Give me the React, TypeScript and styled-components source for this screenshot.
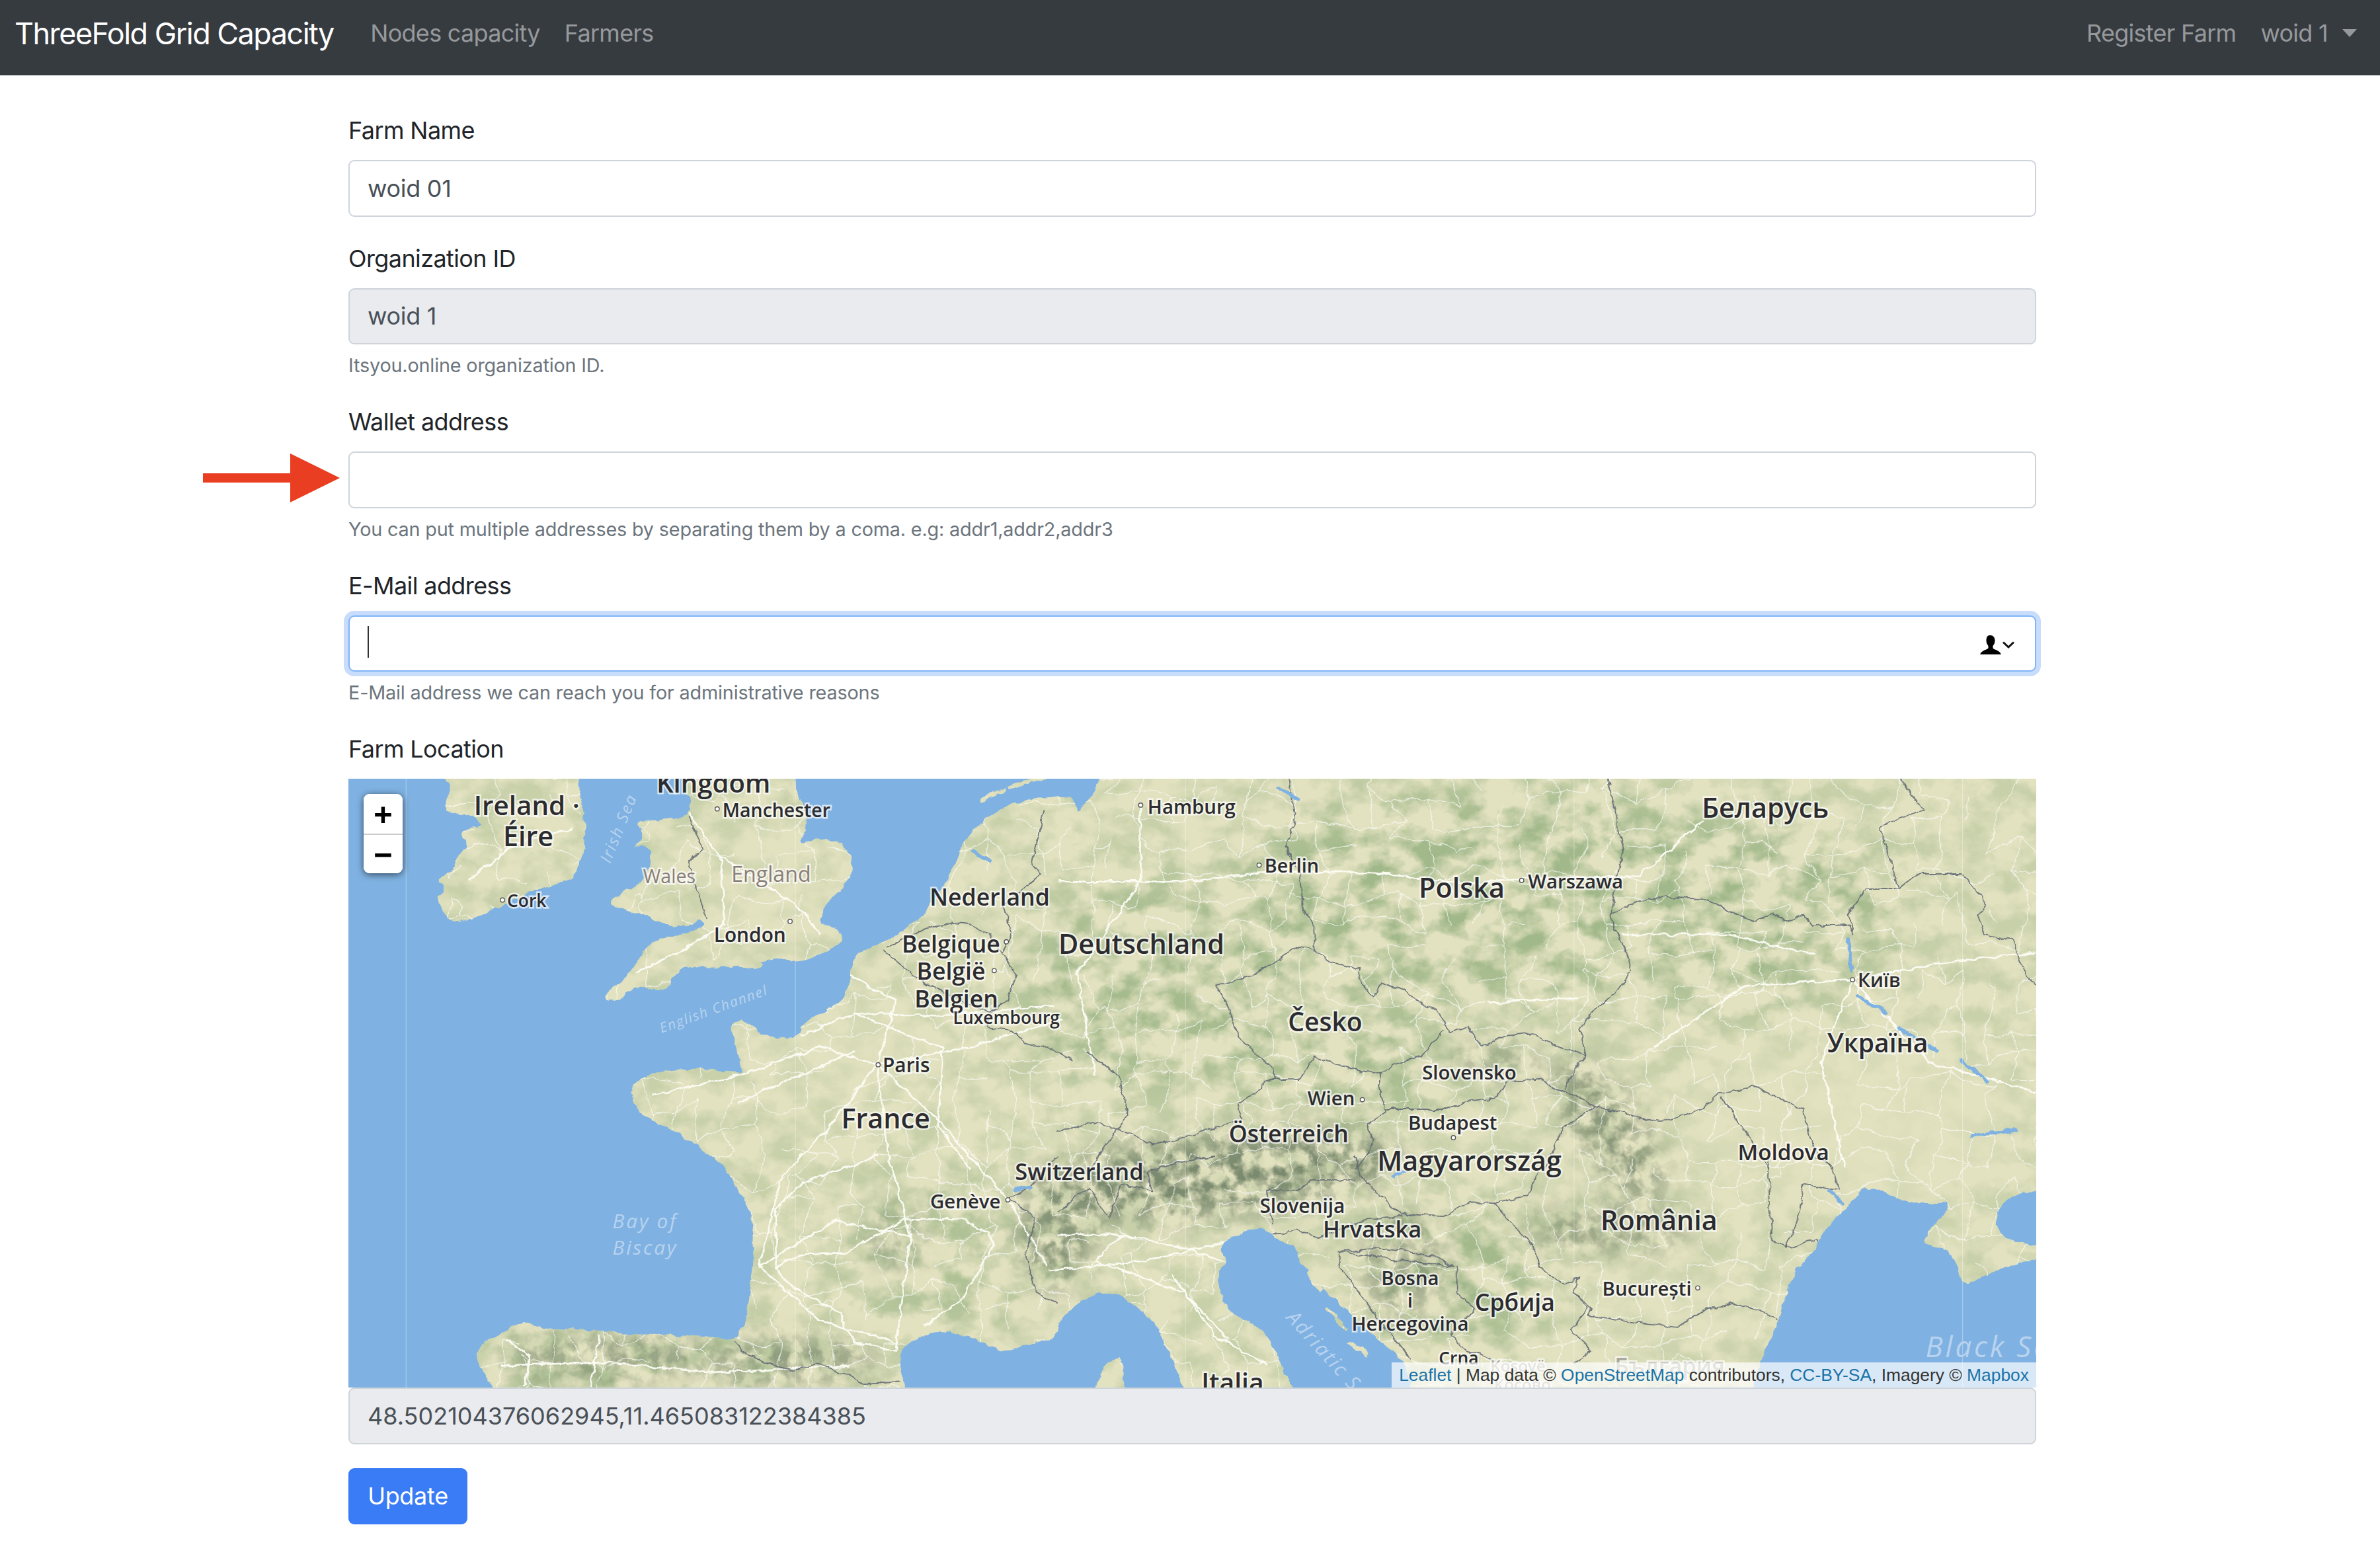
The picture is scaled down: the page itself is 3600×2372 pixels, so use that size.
import React from "react";
import styled, { createGlobalStyle } from "styled-components";

const SANS = `Inter, "Liberation Sans", Arial, sans-serif`;

const Global = createGlobalStyle`
  html, body { margin: 0; padding: 0; background: #fff; }
  body { font-family: ${SANS}; color: #212529; }
  * { box-sizing: border-box; }
`;

const Page = styled.div`
  width: 3600px;
  min-height: 2372px;
  background: #fff;
`;

const NavBar = styled.nav`
  height: 114px;
  background: #363b40;
  display: flex;
  align-items: center;
  padding: 0 35px 14px 22px;
`;

const Brand = styled.a`
  font-size: 45px;
  letter-spacing: -1.55px;
  color: #fff;
  text-decoration: none;
  margin-right: 37px;
  white-space: nowrap;
`;

const NavLink = styled.a`
  font-size: 36px;
  letter-spacing: -0.72px;
  color: #96999c;
  text-decoration: none;
  padding: 0 18.500px;
  white-space: nowrap;
  display: inline-flex;
  align-items: center;
`;

const NavSpacer = styled.div`
  flex: 1;
`;

const Caret = styled.span`
  width: 0;
  height: 0;
  margin-left: 22px;
  margin-right: -18.500px;
  border-top: 12px solid #96999c;
  border-left: 11px solid transparent;
  border-right: 11px solid transparent;
`;

const Main = styled.main`
  width: 2553px;
  margin-left: 527px;
  padding-top: 56px;
`;

const Group = styled.div`
  position: relative;
  margin-bottom: 36px;
`;

const Label = styled.label`
  display: block;
  font-size: 36px;
  line-height: 54px;
  margin-bottom: 18px;
  letter-spacing: -0.6px;
  color: #212529;
`;

const TextInput = styled.input`
  display: block;
  width: 100%;
  height: 85.5px;
  padding: 0 27px;
  font-family: ${SANS};
  font-size: 36px;
  letter-spacing: -0.3px;
  color: #495057;
  background: #fff;
  border: 2.25px solid #ced4da;
  border-radius: 9px;
  outline: none;
  &.muted { background: #e9ebef; }
  &.focus { border-color: #80b4f8; box-shadow: 0 0 0 7px #c8dcfb; }
`;

const Help = styled.small`
  display: block;
  margin-top: 9px;
  font-size: 28.8px;
  line-height: 45px;
  letter-spacing: -0.18px;
  color: #6c757d;
`;

const ArrowMark = styled.svg`
  position: absolute;
  left: -220px;
  top: 75px;
  width: 207px;
  height: 74px;
`;

const TextCaret = styled.span`
  position: absolute;
  left: 29px;
  top: 88px;
  width: 2px;
  height: 48px;
  background: #333;
`;

const FillIcon = styled.svg`
  position: absolute;
  right: 33px;
  top: 101px;
  width: 52px;
  height: 30px;
`;

const MapBox = styled.div`
  position: relative;
  height: 921px;
  overflow: hidden;
  background: #7fb2e2;
`;

const MapArt = styled.svg`
  display: block;
  width: 100%;
  height: 100%;
`;

const ZoomBar = styled.div`
  position: absolute;
  left: 23px;
  top: 23px;
  width: 59px;
  border-radius: 9px;
  overflow: hidden;
  box-shadow: 0 2px 11px rgba(0, 0, 0, 0.6);
  background: #fff;
`;

const ZoomButton = styled.a`
  display: flex;
  align-items: center;
  justify-content: center;
  height: 60px;
  padding-top: 9px;
  font-family: "Liberation Mono", "Courier New", monospace;
  font-weight: 700;
  font-size: 49px;
  color: #000;
  background: #fff;
  text-decoration: none;
  & + & { border-top: 2px solid #ccc; }
`;

const Attribution = styled.div`
  position: absolute;
  right: 0;
  bottom: 0;
  height: 38px;
  padding: 0 11px;
  display: flex;
  align-items: center;
  white-space: pre;
  font-family: "Liberation Sans", Arial, sans-serif;
  font-size: 26.4px;
  color: #333;
  background: rgba(255, 255, 255, 0.7);
`;

const AttrLink = styled.a`
  color: #1a73a8;
  text-decoration: none;
`;

const CoordInput = styled(TextInput)`
  background: #e9ebef;
  margin-bottom: 36px;
  letter-spacing: 0;
`;

const SubmitButton = styled.button`
  display: block;
  width: 180px;
  height: 85.5px;
  padding: 0;
  font-family: ${SANS};
  font-size: 36px;
  letter-spacing: -0.3px;
  color: #fff;
  background: #3a7bf6;
  border: none;
  border-radius: 9px;
`;

const MapLabel = styled.text<{ $size: number; $tone?: string }>`
  font-family: "Open Sans", sans-serif;
  font-weight: ${(p) => (p.$tone === "soft" || p.$tone === "water" ? 400 : 600)};
  font-style: ${(p) => (p.$tone === "water" ? "italic" : "normal")};
  font-size: ${(p) => p.$size}px;
  letter-spacing: ${(p) => (p.$tone === "water" ? "0.09em" : "0")};
  fill: ${(p) => (p.$tone === "soft" ? "#8a7f78" : p.$tone === "water" ? "#b9d2ee" : p.$tone === "ghost" ? "#a8a89c" : "#2c2c2f")};
  stroke: ${(p) => (p.$tone === "water" ? "none" : "rgba(255,255,255,0.7)")};
  stroke-width: 2.2px;
  paint-order: stroke;
  text-anchor: middle;
  dominant-baseline: central;
`;

type P = [number, number];
const A = (x: number, y: number): P => [217.8 + 0.3055 * x, 509.6 + 0.1667 * y];
const B = (x: number, y: number): P => [696.9 + 0.4166 * x, 509.6 + 0.1667 * y];
const C = (x: number, y: number): P => [217.8 + 0.3055 * x, 762.2 + 0.1728 * y];
const D = (x: number, y: number): P => [696.9 + 0.4166 * x, 762.2 + 0.1728 * y];

const mapAll = (f: (x: number, y: number) => P, raw: number[]): P[] => {
  const out: P[] = [];
  for (let i = 0; i < raw.length; i += 2) out.push(f(raw[i], raw[i + 1]));
  return out;
};

const line = (pts: P[]) => "M" + pts.map((p) => `${p[0].toFixed(1)} ${p[1].toFixed(1)}`).join("L");

const smooth = (pts: P[]) => {
  const n = pts.length;
  const mid = (a: P, b: P): P => [(a[0] + b[0]) / 2, (a[1] + b[1]) / 2];
  const s = mid(pts[n - 1], pts[0]);
  let d = `M${s[0].toFixed(1)} ${s[1].toFixed(1)}`;
  for (let i = 0; i < n; i++) {
    const m = mid(pts[i], pts[(i + 1) % n]);
    d += `Q${pts[i][0].toFixed(1)} ${pts[i][1].toFixed(1)} ${m[0].toFixed(1)} ${m[1].toFixed(1)}`;
  }
  return d + "Z";
};

const IRELAND: P[] = [
  [292, 495], [292, 504], [292.6, 514], [298.8, 519.6], [292.6, 527.9], [294.2, 536.3], [312.5, 538], [320.1, 545.4], [301.8, 547],
  [309.5, 557.9], [298.8, 567.9], [300.3, 573.8], [286.5, 580.4], [294.2, 583.8], [287.5, 593], [294.2, 604.6], [300.9, 609.6],
  [333.9, 596.3], [352.2, 586.3], [378.2, 581.3], [384.3, 562.9], [385.8, 549.6], [384.3, 529.6], [379.7, 521.3], [384.3, 504], [384.3, 495],
];

const BRITAIN: P[] = [
  [454, 495], [490, 495], [523, 495], [523, 504], [523.3, 513.6], [532.5, 542.9], [524.8, 557.9], [538.6, 552.9], [553.9, 554.6], [563, 566.3], [560, 581.3],
  [543.1, 596.3], [538.6, 609.6], [555.4, 613], [553.9, 623], [529.4, 634.6], [511.1, 632.1], [492.8, 635.5], [471.4, 638],
  [453, 636.3], [442.3, 644.6], [440.8, 653.8], [416.4, 649.6], [407.2, 661.3], [395, 658], [413.3, 644.6], [425.5, 623],
  [437.8, 618], [462.2, 613], [463.7, 605.5], [450, 611.3], [437.8, 609.6], [428.6, 604.6], [404.2, 598], [402.6, 593],
  [416.4, 584.6], [428.6, 576.3], [428.6, 557.9], [416.4, 558.8], [425.5, 549.6], [417.9, 541.3], [431.7, 541.3], [453, 537.9],
  [456.1, 527.9], [448.4, 519.6], [454, 505],
];

const MAINLAND: P[] = [
  [726, 495], [726, 504], [726, 514], [716, 530], [710, 536], [707, 526], [697, 524], [676, 527], [655, 536], [645.5, 543], [636, 553],
  [630, 565], [627, 576], [615, 594.6], [603, 608], [584, 621], [563, 628], [560, 643], [558.4, 656], [547.7, 664.6], [529.4, 673],
  [525, 686], [502, 683], [494, 674], [480.5, 673], [484, 686], [488, 704.6], [490, 708], [453, 703], [416, 711], [416, 729.6],
  [428.6, 738], [453, 751], [471, 763], [477.5, 771], [480.5, 772.6], [486.6, 786.4], [494.3, 798.5], [497.3, 814], [495.8, 840],
  [491.2, 872.8], [483.6, 884], [462.2, 881.4], [440.8, 879.7], [413.3, 879.7], [388.9, 876], [361.4, 876], [346.1, 871],
  [335.4, 876], [315.6, 886.6], [312.5, 897], [324.7, 914], [328, 925], [330, 935], [590, 935], [594, 925], [596.6, 914], [592, 891.8], [596.6, 886.6],
  [611.9, 878], [624, 878], [645.5, 883], [660.8, 891.8], [676, 886.6], [696.9, 881.4], [697, 869.3], [722, 850.3], [738.6, 853.8],
  [759.4, 869.3], [770, 890], [780, 914], [783, 925], [785, 935], [860, 935], [855, 925], [851, 914], [834.4, 876.2], [807.3, 864.2], [801, 840], [809.4, 831.3],
  [801, 821], [830.2, 807.1], [836.5, 812.3], [840.6, 817.5], [853.1, 821], [857.3, 834.8], [880.2, 857.2], [905.2, 881.4], [926, 897],
  [930, 920], [935, 935], [1150, 935], [1155, 915], [1159.3, 897.9], [1174, 866], [1180, 840], [1196.8, 822.7], [1201, 812], [1219.7, 793.3], [1230, 779.5],
  [1259.3, 795], [1288.5, 791.6], [1271.8, 810.6], [1265.6, 819.2], [1288.5, 826], [1292.6, 850.3], [1313.5, 836.5], [1352, 827.9],
  [1352, 821], [1321.8, 819.2], [1313.5, 805.4], [1321.8, 788], [1352, 783], [1356, 775], [1362, 650], [1362, 495], [1340, 495],
];

const LAND = [
  smooth(IRELAND),
  smooth(BRITAIN),
  smooth(MAINLAND),
  "M486 636a8 3.5 0 1 0 16 0a8 3.5 0 1 0 -16 0Z",
  "M722 914q4 -18 16 -20q4 8 2 24l-3 10h-14Z",
  "M645 528q10 -7 18 -9l-1 2q-8 4 -16 9Z",
  "M664 519q10 -5 24 -7l1 2q-12 2 -24 7Z",
  "M862 838l10 12l-2 2l-10 -12Z",
  "M875 862l14 14l-2 1l-14 -14Z",
  "M890 884l12 8l-2 2l-12 -8Z",
  "M780 905a5 3 0 1 0 8 0Z",
];

const BORDERS: P[][] = [
  mapAll(B, [365, 20, 375, 200, 360, 290, 385, 420, 385, 530, 405, 600, 405, 700]),
  mapAll(B, [405, 700, 370, 690, 355, 735, 310, 800, 250, 840, 270, 930, 285, 1040, 340, 1170, 345, 1210, 385, 1210, 405, 1125, 460, 1170, 510, 1190, 530, 1155, 575, 1120, 610, 1020]),
  mapAll(B, [405, 700, 430, 745, 480, 780, 475, 820, 500, 885, 510, 830, 550, 860, 570, 910, 600, 935, 620, 1030, 650, 1005, 670, 1085, 700, 1045, 750, 1030, 790, 1080, 835, 1115]),
  mapAll(B, [835, 1115, 825, 1010, 850, 940, 900, 825, 905, 740, 880, 620, 875, 560, 885, 400, 895, 310, 870, 20]),
  mapAll(B, [875, 560, 915, 510, 960, 490, 1020, 500, 1075, 560, 1100, 590, 1130, 560, 1160, 590, 1180, 560, 1195, 610, 1250, 600, 1258, 640, 1250, 560, 1280, 460, 1330, 460, 1360, 400, 1430, 400, 1470, 520, 1455, 570, 1465, 640, 1510, 660, 1530, 800, 1547, 840]),
  mapAll(B, [1330, 20, 1370, 150, 1300, 210, 1330, 460]),
  mapAll(B, [345, 1210, 325, 1220, 320, 1250, 285, 1310, 290, 1370, 250, 1400, 190, 1450, 150, 1470, 110, 1420, 55, 1380, 0, 1420]),
  mapAll(B, [510, 1190, 510, 1270, 520, 1340, 490, 1390, 500, 1450, 490, 1500, 470, 1568]),
  mapAll(B, [520, 1330, 610, 1330, 650, 1300, 690, 1290, 710, 1220, 760, 1215, 790, 1250, 835, 1300, 850, 1320, 950, 1380, 1020, 1330, 1045, 1270, 1100, 1240, 1180, 1330, 1190, 1450, 1225, 1568]),
  mapAll(B, [835, 1115, 800, 1250]),
  mapAll(B, [1050, 1280, 1095, 1450, 1125, 1568]),
  mapAll(B, [850, 1320, 800, 1400, 770, 1568]),
  mapAll(D, [760, 60, 745, 150, 690, 180, 655, 175, 610, 230, 545, 220, 490, 110, 475, 50, 470, 0]),
  mapAll(D, [330, 130, 380, 130, 400, 90, 470, 90]),
  mapAll(D, [330, 130, 340, 260]),
  mapAll(D, [340, 300, 380, 280, 410, 310, 490, 240, 545, 225]),
  mapAll(D, [445, 365, 510, 350, 600, 385, 625, 420, 445, 365, 445, 420, 470, 500, 500, 600, 540, 720, 560, 780]),
  mapAll(D, [630, 420, 630, 520, 660, 580, 620, 680, 640, 730, 690, 780]),
  mapAll(D, [690, 180, 720, 260, 755, 350, 760, 420, 800, 490, 825, 460, 815, 520, 845, 580, 840, 610, 900, 630, 980, 650, 1020, 590, 1070, 560, 1110, 590, 1145, 630]),
  mapAll(D, [815, 520, 840, 580, 810, 660, 845, 740, 815, 790]),
  mapAll(D, [1125, 0, 1125, 150, 1130, 320, 1160, 350, 1200, 315, 1210, 360]),
  mapAll(D, [1200, 0, 1225, 40, 1235, 130, 1180, 110, 1170, 250, 1150, 350]),
  mapAll(C, [870, 705, 900, 760, 960, 800, 1000, 820, 1050, 790, 1110, 830, 1150, 870, 1230, 860]),
  mapAll(C, [1568, 0, 1500, 130, 1460, 160, 1520, 230, 1500, 370, 1520, 520, 1568, 560]),
  mapAll(D, [0, 210, 50, 120, 80, 240, 100, 110, 150, 130, 140, 60, 200, 20, 250, 0]),
  mapAll(A, [1190, 700, 1230, 760, 1280, 830, 1340, 880, 1420, 950, 1420, 1010, 1470, 1020, 1500, 1070, 1568, 1100, 1600, 1140]),
  mapAll(A, [1200, 690, 1280, 620, 1340, 590, 1380, 600, 1420, 640, 1450, 720, 1480, 800, 1460, 900, 1420, 950]),
  mapAll(A, [1450, 720, 1470, 630, 1450, 530, 1530, 400, 1510, 350, 1540, 150]),
  mapAll(A, [1630, 1100, 1700, 1200, 1720, 1350, 1660, 1500, 1640, 1568]),
  mapAll(A, [770, 170, 800, 300, 770, 350, 800, 520, 810, 575]),
];

const LAKES: P[][] = [
  mapAll(B, [1250, 660, 1255, 780]),
  mapAll(B, [1265, 880, 1310, 950]),
  mapAll(B, [1330, 1010, 1390, 1100]),
  mapAll(B, [1430, 1140, 1470, 1220]),
  mapAll(B, [1445, 1435, 1515, 1410]),
  mapAll(B, [350, 60, 380, 105]),
  mapAll(D, [530, 75, 555, 55]),
  mapAll(C, [1475, 130, 1510, 118]),
  mapAll(A, [1385, 310, 1420, 350]),
  mapAll(D, [1220, 130, 1240, 180]),
];

const MAJOR_ROADS: P[][] = [
  mapAll(A, [770, 160, 840, 330, 850, 600, 760, 700, 660, 790]),
  mapAll(A, [840, 330, 1000, 520, 1060, 640]),
  mapAll(A, [300, 420, 400, 280, 520, 220]),
  mapAll(C, [1110, 370, 1030, 370, 980, 400, 960, 430, 990, 490, 1100, 600, 1110, 650, 1130, 710, 1220, 740]),
  mapAll(C, [960, 430, 960, 200, 1020, 100, 1180, 0]),
  mapAll(C, [1110, 370, 1190, 290, 1240, 240, 1360, 240, 1420, 290, 1430, 340, 1360, 550, 1280, 650]),
  mapAll(C, [380, 700, 430, 760, 420, 880]),
  mapAll(C, [580, 680, 560, 880]),
  mapAll(A, [1010, 1040, 1130, 950, 1320, 1090, 1310, 1400, 1380, 1568]),
  mapAll(A, [880, 1300, 1130, 1100]),
  mapAll(A, [1130, 950, 1310, 960, 1560, 920]),
  mapAll(B, [400, 390, 500, 395, 640, 440]),
  mapAll(B, [640, 440, 740, 420, 920, 410, 1020, 190]),
  mapAll(B, [0, 430, 200, 430, 310, 400, 400, 390]),
  mapAll(B, [130, 140, 130, 430, 30, 800, 60, 1200]),
  mapAll(B, [680, 910, 820, 890]),
  mapAll(B, [890, 640, 1060, 640, 1200, 720]),
  mapAll(D, [0, 300, 100, 300, 200, 350, 260, 400]),
  mapAll(D, [100, 300, 60, 400, 200, 520, 270, 700]),
  [[578, 702], [540, 690], [490, 708], [430, 722]],
  [[578, 702], [545, 745], [515, 775], [500, 835]],
  [[578, 702], [585, 760], [600, 815], [590, 890]],
  [[578, 702], [620, 740], [664, 791], [690, 835]],
  [[578, 702], [640, 690], [700, 672]],
  [[578, 702], [590, 660], [555, 640]],
  [[500, 835], [550, 805], [600, 815]],
  [[500, 835], [540, 870], [590, 885]],
  [[1220, 646], [1280, 635], [1341, 628]],
  [[1220, 646], [1200, 700], [1215, 770]],
  [[1220, 646], [1150, 650], [1090, 690]],
  [[1220, 646], [1270, 700], [1341, 720]],
  [[330, 900], [400, 898], [470, 905], [560, 900]],
  [[690, 838], [760, 830], [825, 815]],
  [[772, 840], [800, 880], [835, 900]],
];

const seeded = (seed: number) => {
  let s = seed;
  return () => {
    s = (s * 16807) % 2147483647;
    return s / 2147483647;
  };
};

const buildRoads = () => {
  const r = seeded(424242);
  const step = 17;
  const cols = Math.ceil(1130 / step);
  const rows = Math.ceil(420 / step);
  const nodes: P[][] = [];
  for (let j = 0; j <= rows; j++) {
    const row: P[] = [];
    for (let i = 0; i <= cols; i++) {
      row.push([225 + i * step + (r() - 0.5) * 14, 508 + j * step + (r() - 0.5) * 14]);
    }
    nodes.push(row);
  }
  const light: string[] = [];
  for (let j = 0; j <= rows; j++) {
    for (let i = 0; i <= cols; i++) {
      const n = nodes[j][i];
      const link = (m: P) => {
        const cx = (n[0] + m[0]) / 2 + (r() - 0.5) * 8;
        const cy = (n[1] + m[1]) / 2 + (r() - 0.5) * 8;
        light.push(`M${n[0].toFixed(1)} ${n[1].toFixed(1)}Q${cx.toFixed(1)} ${cy.toFixed(1)} ${m[0].toFixed(1)} ${m[1].toFixed(1)}`);
      };
      if (i < cols && r() < 0.6) link(nodes[j][i + 1]);
      if (j < rows && r() < 0.6) link(nodes[j + 1][i]);
    }
  }
  return light.join("");
};

const MINOR_ROADS = buildRoads();

type Lbl = { t: string; x: number; y: number; s: number; tone?: string; rot?: number };
const LABELS: Lbl[] = [
  { t: "Kingdom", x: 470, y: 516, s: 17.5 },
  { t: "Manchester", x: 511.5, y: 534, s: 12.4 },
  { t: "Ireland ·", x: 347, y: 531, s: 17.6 },
  { t: "Éire", x: 348, y: 551, s: 18 },
  { t: "Cork", x: 347, y: 593.5, s: 11.5 },
  { t: "Wales", x: 441, y: 577.5, s: 12.5, tone: "soft" },
  { t: "England", x: 508, y: 576, s: 14, tone: "soft" },
  { t: "London", x: 494, y: 616, s: 13 },
  { t: "Nederland", x: 652, y: 591, s: 15.5 },
  { t: "Belgique", x: 626.5, y: 622, s: 15.5 },
  { t: "België", x: 626.5, y: 640, s: 15.5 },
  { t: "Belgien", x: 630, y: 658, s: 15.5 },
  { t: "Luxembourg", x: 663, y: 671, s: 11.5 },
  { t: "Deutschland", x: 752, y: 622, s: 18 },
  { t: "Paris", x: 597, y: 702, s: 13 },
  { t: "France", x: 583.5, y: 737, s: 18 },
  { t: "Hamburg", x: 785, y: 532, s: 12.8 },
  { t: "Berlin", x: 851, y: 570.5, s: 12.5 },
  { t: "Polska", x: 963, y: 585, s: 18 },
  { t: "Warszawa", x: 1038, y: 581, s: 12.8 },
  { t: "Беларусь", x: 1163, y: 532.5, s: 18 },
  { t: "Київ", x: 1238, y: 646, s: 12.8 },
  { t: "Україна", x: 1237, y: 687, s: 17 },
  { t: "Česko", x: 873, y: 673, s: 17 },
  { t: "Slovensko", x: 968, y: 707, s: 12.8 },
  { t: "Wien", x: 877, y: 724, s: 12.8 },
  { t: "Österreich", x: 849, y: 747, s: 15.5 },
  { t: "Budapest", x: 957, y: 740, s: 12.8 },
  { t: "Magyarország", x: 968, y: 765, s: 18 },
  { t: "Moldova", x: 1175, y: 759, s: 14.5 },
  { t: "Switzerland", x: 711, y: 772, s: 15 },
  { t: "Genève", x: 636, y: 792, s: 12.8 },
  { t: "Slovenija", x: 858, y: 794.5, s: 13 },
  { t: "Hrvatska", x: 904, y: 810, s: 15 },
  { t: "România", x: 1093, y: 804, s: 18 },
  { t: "Bosna", x: 929, y: 842.5, s: 12.8 },
  { t: "i", x: 929, y: 857, s: 12.8 },
  { t: "Hercegovina", x: 929, y: 872.5, s: 12.8 },
  { t: "Србија", x: 998, y: 858, s: 15.5 },
  { t: "București", x: 1085, y: 849.5, s: 12.8 },
  { t: "Italia", x: 812, y: 911, s: 17 },
  { t: "Crna", x: 961, y: 895, s: 11.5 },
  { t: "Kosovë", x: 1000, y: 900, s: 10.5, tone: "ghost" },
  { t: "България", x: 1100, y: 900, s: 15, tone: "ghost" },
  { t: "Косово", x: 1003, y: 912, s: 10.5, tone: "ghost" },
  { t: "Irish Sea", x: 407, y: 546, s: 10.5, tone: "water", rot: -68 },
  { t: "English Channel", x: 470, y: 665, s: 9, tone: "water", rot: -20 },
  { t: "Bay of", x: 425, y: 804.5, s: 13, tone: "water" },
  { t: "Biscay", x: 425, y: 822, s: 13, tone: "water" },
  { t: "Adriatic Sea", x: 878, y: 896, s: 13, tone: "water", rot: 48 },
  { t: "Black Sea", x: 1316, y: 887, s: 19, tone: "water" },
];

const DOTS: P[] = [
  [472.5, 533.5], [331, 593.5], [520.5, 607.5], [578.5, 702], [751.5, 531], [829.5, 570.5], [1002.5, 580.5], [1220.5, 646],
  [897.5, 725], [957.5, 750], [664, 791], [1118.5, 849], [663, 621], [655, 640],
];

const SEAMS = [267.5, 524, 781, 1037, 1293];

const MapDrawing = () => (
  <MapArt viewBox="229.5 513.6 1112 401" preserveAspectRatio="none" aria-hidden="true">
    <defs>
      <clipPath id="landClip">
        {LAND.map((d, i) => (
          <path key={i} d={d} />
        ))}
      </clipPath>
      <filter id="rough" filterUnits="userSpaceOnUse" x="200" y="490" width="1170" height="450">
        <feTurbulence type="fractalNoise" baseFrequency="0.14" numOctaves="3" seed="11" result="n" />
        <feDisplacementMap in="SourceGraphic" in2="n" scale="4" xChannelSelector="R" yChannelSelector="G" />
      </filter>
      <filter id="mottle" filterUnits="userSpaceOnUse" x="200" y="490" width="1170" height="450" colorInterpolationFilters="sRGB">
        <feTurbulence type="fractalNoise" baseFrequency="0.045 0.06" numOctaves="4" seed="5" />
        <feColorMatrix type="matrix" values="0 0 0 0 0.63  0 0 0 0 0.72  0 0 0 0 0.54  3 0 0 0 -1.15" />
      </filter>
      <filter id="ridge" filterUnits="userSpaceOnUse" x="200" y="490" width="1170" height="450" colorInterpolationFilters="sRGB">
        <feTurbulence type="fractalNoise" baseFrequency="0.1" numOctaves="4" seed="23" />
        <feColorMatrix type="matrix" values="0 0 0 0 0.48  0 0 0 0 0.54  0 0 0 0 0.43  3 0 0 0 -1.05" />
      </filter>
      <filter id="soften" x="-40%" y="-40%" width="180%" height="180%">
        <feGaussianBlur stdDeviation="18" />
      </filter>
      <filter id="softer" x="-40%" y="-40%" width="180%" height="180%">
        <feGaussianBlur stdDeviation="9" />
      </filter>
      <mask id="greenMask" maskUnits="userSpaceOnUse" x="200" y="490" width="1170" height="450">
        <rect x="200" y="490" width="1170" height="450" fill="#6a6a6a" />
        <g filter="url(#soften)">
          <ellipse cx="1000" cy="590" rx="190" ry="70" fill="#fff" />
          <ellipse cx="1140" cy="600" rx="110" ry="60" fill="#fff" />
          <ellipse cx="760" cy="650" rx="90" ry="70" fill="#eee" />
          <ellipse cx="880" cy="700" rx="80" ry="40" fill="#eee" />
          <ellipse cx="960" cy="840" rx="60" ry="50" fill="#fff" />
          <ellipse cx="420" cy="900" rx="110" ry="20" fill="#fff" />
          <ellipse cx="620" cy="830" rx="70" ry="50" fill="#ccc" />
          <ellipse cx="1220" cy="740" rx="110" ry="60" fill="#1a1a1a" />
          <ellipse cx="1090" cy="860" rx="70" ry="20" fill="#2a2a2a" />
          <ellipse cx="960" cy="775" rx="40" ry="20" fill="#2a2a2a" />
          <ellipse cx="560" cy="690" rx="60" ry="40" fill="#333" />
          <ellipse cx="510" cy="590" rx="45" ry="40" fill="#333" />
        </g>
      </mask>
      <mask id="ridgeMask" maskUnits="userSpaceOnUse" x="200" y="490" width="1170" height="450">
        <g filter="url(#softer)">
          <ellipse cx="800" cy="775" rx="125" ry="26" fill="#fff" transform="rotate(-6 800 775)" />
          <ellipse cx="695" cy="815" rx="24" ry="34" fill="#ddd" />
          <ellipse cx="1060" cy="745" rx="22" ry="55" fill="#ccc" transform="rotate(-35 1060 745)" />
          <ellipse cx="1060" cy="810" rx="55" ry="14" fill="#bbb" />
          <ellipse cx="520" cy="897" rx="60" ry="12" fill="#ddd" />
          <ellipse cx="400" cy="895" rx="70" ry="14" fill="#bbb" />
          <ellipse cx="985" cy="700" rx="32" ry="10" fill="#aaa" />
          <ellipse cx="925" cy="835" rx="30" ry="35" fill="#999" />
          <ellipse cx="590" cy="815" rx="18" ry="22" fill="#888" />
        </g>
      </mask>
    </defs>
    <rect x="229" y="513" width="1114" height="403" fill="#7fb2e2" />
    <g filter="url(#rough)">
      <g clipPath="url(#landClip)">
        <rect x="200" y="490" width="1170" height="450" fill="#e3e2c0" />
        <g mask="url(#greenMask)">
          <rect x="200" y="490" width="1170" height="450" fill="#000" filter="url(#mottle)" />
        </g>
        <g mask="url(#ridgeMask)">
          <rect x="200" y="490" width="1170" height="450" fill="#000" filter="url(#ridge)" />
        </g>
        <path d={MINOR_ROADS} fill="none" stroke="#fff" strokeWidth="0.6" opacity="0.62" />
        {MAJOR_ROADS.map((p, i) => (
          <path key={i} d={line(p)} fill="none" stroke="#fdfdf6" strokeWidth="1.2" opacity="0.92" strokeLinejoin="round" />
        ))}
        {BORDERS.map((p, i) => (
          <path key={i} d={line(p)} fill="none" stroke="#5e6672" strokeWidth="0.8" strokeLinejoin="round" opacity="0.85" />
        ))}
        {LAKES.map((p, i) => (
          <path key={i} d={line(p)} fill="none" stroke="#7fb2e2" strokeWidth="2.2" strokeLinecap="round" />
        ))}
      </g>
    </g>
    {SEAMS.map((x) => (
      <path key={x} d={`M${x} 513V915`} stroke="#fff" strokeWidth="0.4" opacity="0.4" />
    ))}
    {DOTS.map((d, i) => (
      <circle key={i} cx={d[0]} cy={d[1]} r="1.4" fill="#fff" stroke="#555" strokeWidth="0.6" />
    ))}
    {LABELS.map((l) => (
      <MapLabel
        key={l.t}
        x={l.x}
        y={l.y}
        $size={l.s}
        $tone={l.tone}
        transform={l.rot ? `rotate(${l.rot} ${l.x} ${l.y})` : undefined}
      >
        {l.t}
      </MapLabel>
    ))}
  </MapArt>
);

export default function App() {
  return (
    <Page>
      <Global />
      <NavBar>
        <Brand href="#">ThreeFold Grid Capacity</Brand>
        <NavLink href="#">Nodes capacity</NavLink>
        <NavLink href="#">Farmers</NavLink>
        <NavSpacer />
        <NavLink href="#">Register Farm</NavLink>
        <NavLink href="#">
          woid 1<Caret />
        </NavLink>
      </NavBar>
      <Main>
        <Group>
          <Label>Farm Name</Label>
          <TextInput readOnly value="woid 01" />
        </Group>
        <Group>
          <Label>Organization ID</Label>
          <TextInput className="muted" readOnly value="woid 1" />
          <Help>Itsyou.online organization ID.</Help>
        </Group>
        <Group>
          <Label>Wallet address</Label>
          <TextInput readOnly value="" />
          <Help>You can put multiple addresses by separating them by a coma. e.g: addr1,addr2,addr3</Help>
          <ArrowMark viewBox="0 0 207 74">
            <path d="M0 30H132V0L207 37L132 74V44H0Z" fill="#e93e22" />
          </ArrowMark>
        </Group>
        <Group>
          <Label>E-Mail address</Label>
          <TextInput className="focus" readOnly value="" />
          <TextCaret />
          <FillIcon viewBox="0 0 52 30">
            <path d="M15 1c5 0 7.500 3.500 7.500 8 0 3-1 6-3 8v3.500c1 2 10 3 12.500 9.500H0c2.500-6.500 11.500-7.500 12.500-9.500V17c-2-2-3-5-3-8 0-4.500 1.500-8 5.500-8Z" fill="#000" />
            <path d="M35 11.500L43 19L51 11.500" fill="none" stroke="#111" strokeWidth="3" />
          </FillIcon>
          <Help>E-Mail address we can reach you for administrative reasons</Help>
        </Group>
        <div>
          <Label>Farm Location</Label>
          <MapBox>
            <MapDrawing />
            <ZoomBar>
              <ZoomButton href="#">+</ZoomButton>
              <ZoomButton href="#">−</ZoomButton>
            </ZoomBar>
            <Attribution>
              <AttrLink href="#">Leaflet</AttrLink>
              {" | Map data © "}
              <AttrLink href="#">OpenStreetMap</AttrLink>
              {" contributors, "}
              <AttrLink href="#">CC-BY-SA</AttrLink>
              {", Imagery © "}
              <AttrLink href="#">Mapbox</AttrLink>
            </Attribution>
          </MapBox>
          <CoordInput readOnly value="48.502104376062945,11.465083122384385" />
          <SubmitButton>Update</SubmitButton>
        </div>
      </Main>
    </Page>
  );
}
